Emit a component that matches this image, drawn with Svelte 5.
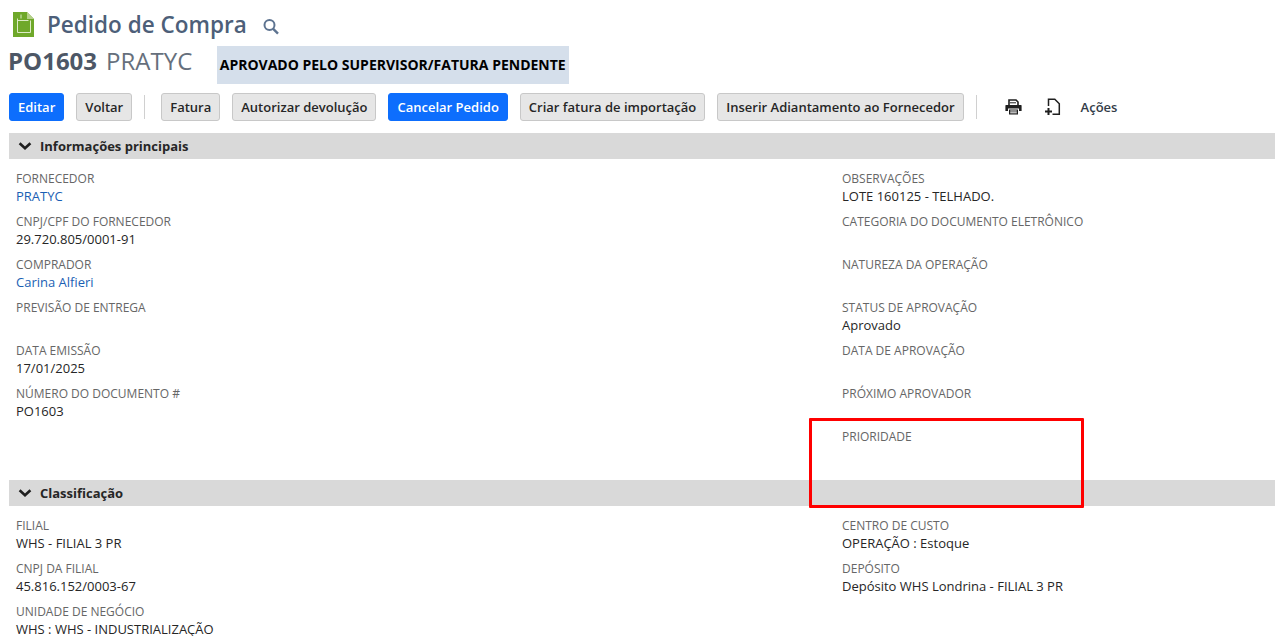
<script>
  const buttons = [
    [
      { label: 'Editar', primary: true },
      { label: 'Voltar' }
    ],
    [
      { label: 'Fatura' },
      { label: 'Autorizar devolução' },
      { label: 'Cancelar Pedido', primary: true },
      { label: 'Criar fatura de importação' },
      { label: 'Inserir Adiantamento ao Fornecedor' }
    ]
  ];

  const mainLeft = [
    { label: 'Fornecedor', value: 'PRATYC', link: true },
    { label: 'CNPJ/CPF do Fornecedor', value: '29.720.805/0001-91' },
    { label: 'Comprador', value: 'Carina Alfieri', link: true },
    { label: 'Previsão de entrega', value: '' },
    { label: 'Data Emissão', value: '17/01/2025' },
    { label: 'Número do documento #', value: 'PO1603' }
  ];
  const mainRight = [
    { label: 'Observações', value: 'LOTE 160125 - TELHADO.' },
    { label: 'Categoria do Documento Eletrônico', value: '' },
    { label: 'Natureza da Operação', value: '' },
    { label: 'Status de aprovação', value: 'Aprovado' },
    { label: 'Data de aprovação', value: '' },
    { label: 'Próximo aprovador', value: '' },
    { label: 'Prioridade', value: '' }
  ];
  const classLeft = [
    { label: 'Filial', value: 'WHS - FILIAL 3 PR' },
    { label: 'CNPJ da Filial', value: '45.816.152/0003-67' },
    { label: 'Unidade de negócio', value: 'WHS : WHS - INDUSTRIALIZAÇÃO' }
  ];
  const classRight = [
    { label: 'Centro de Custo', value: 'OPERAÇÃO : Estoque' },
    { label: 'Depósito', value: 'Depósito WHS Londrina - FILIAL 3 PR' }
  ];
</script>

{#snippet chevron()}
  <svg class="chevron" width="14" height="10" viewBox="0 0 14 10" aria-hidden="true">
    <path d="M1.6 2.2 7 7.2l5.4-5" fill="none" stroke="#1f1f1f" stroke-width="2.6" />
  </svg>
{/snippet}

{#snippet fields(items)}
  <div class="col">
    {#each items as f}
      <div class="field">
        <div class="label">{f.label}</div>
        <div class="value" class:link={f.link}>{f.value}</div>
      </div>
    {/each}
  </div>
{/snippet}

<div class="page">
  <header class="title-row">
    <svg class="doc-icon" width="21" height="27" viewBox="0 0 21 27" aria-hidden="true">
      <path d="M0 1h14l7 7v18H0z" fill="#6fa82a" />
      <path d="M14 1l7 7h-7z" fill="#b5d08a" />
      <path d="M4.5 7.5v14h13v-12M4.5 9.5h11M8 3.5v4" fill="none" stroke="#dcebc5" stroke-width="1" />
    </svg>
    <h1>Pedido de Compra</h1>
    <svg class="search" width="16" height="17" viewBox="0 0 16 17" aria-hidden="true">
      <circle cx="6.5" cy="7" r="5" fill="none" stroke="#5d7390" stroke-width="2" />
      <path d="M10.2 10.8 15 15.6" stroke="#5d7390" stroke-width="2.4" />
    </svg>
  </header>

  <div class="record-row">
    <span class="record-id">PO1603</span>
    <span class="record-name">PRATYC</span>
    <span class="badge">APROVADO PELO SUPERVISOR/FATURA PENDENTE</span>
  </div>

  <div class="toolbar">
    {#each buttons as group, i}
      {#if i > 0}<span class="sep"></span>{/if}
      <div class="group">
        {#each group as b}
          <button class="btn" class:primary={b.primary}>{b.label}</button>
        {/each}
      </div>
    {/each}
    <span class="sep last"></span>
    <svg class="tool print" width="17" height="16" viewBox="0 0 17 16" aria-hidden="true">
      <path d="M4 6V1h7l2 2v3" fill="none" stroke="#1f1f1f" stroke-width="1.6" />
      <path d="M5 3.8h6" stroke="#1f1f1f" stroke-width="1" />
      <path d="M1 6h15a.6.6 0 0 1 .6.6V12H14V9.5H3V12H.4V6.6A.6.6 0 0 1 1 6z" fill="#1f1f1f" />
      <path d="M4 10.5h9v5H4z" fill="#1f1f1f" />
      <path d="M5.2 12h6.6M5.2 13.8h6.6" stroke="#fff" stroke-width="1" />
    </svg>
    <svg class="tool add" width="17" height="18" viewBox="0 0 17 18" aria-hidden="true">
      <path d="M4.5 8V1.2h6.3l4.5 4.5v10.6H8.5" fill="none" stroke="#1f1f1f" stroke-width="1.5" />
      <path d="M4.5 10v7M1 13.5h7" stroke="#1f1f1f" stroke-width="2" />
    </svg>
    <span class="actions">Ações</span>
  </div>

  <section>
    <h2 class="bar">{@render chevron()}Informações principais</h2>
    <div class="grid main">
      {@render fields(mainLeft)}
      {@render fields(mainRight)}
    </div>
  </section>

  <section>
    <h2 class="bar">{@render chevron()}Classificação</h2>
    <div class="grid">
      {@render fields(classLeft)}
      {@render fields(classRight)}
    </div>
  </section>

  <div class="highlight"></div>
</div>

<style>
  :global(body) {
    margin: 0;
    background: #fff;
    overflow: hidden;
  }

  .page {
    position: relative;
    height: 636px;
    overflow: hidden;
    font-family: "Open Sans", "Liberation Sans", sans-serif;
    font-size: 13px;
    color: #262626;
  }

  .title-row {
    display: flex;
    align-items: center;
    height: 38px;
    padding: 12px 0 2px 13px;
    box-sizing: border-box;
  }

  .doc-icon {
    margin-right: 13px;
  }

  h1 {
    margin: 2px 0 0;
    font-size: 22.5px;
    line-height: 30px;
    font-weight: 600;
    color: #4d5f79;
  }

  .search {
    margin: 4px 0 0 16px;
  }

  .record-row {
    display: flex;
    align-items: center;
    height: 46px;
    padding-left: 8px;
    margin-top: 4px;
  }

  .record-id {
    font-size: 24px;
    font-weight: 700;
    color: #4d5766;
    margin-right: 9px;
    margin-bottom: 9px;
  }

  .record-name {
    font-size: 24px;
    color: #666f7c;
    margin-right: 25px;
    margin-bottom: 9px;
  }

  .badge {
    display: flex;
    align-items: center;
    height: 38px;
    padding: 0 3px 2px 2.5px;
    box-sizing: border-box;
    background: #d5dfeb;
    color: #000;
    font-size: 14px;
    font-weight: 700;
  }

  .toolbar {
    display: flex;
    align-items: center;
    height: 28px;
    margin-top: 5px;
    padding-left: 9px;
  }

  .group {
    display: flex;
    gap: 12px;
  }

  .btn {
    height: 28px;
    padding: 0 8px;
    box-sizing: border-box;
    border: 1px solid #c8c8c8;
    border-radius: 3px;
    background: #e6e6e6;
    color: #262626;
    font: 600 13px "Open Sans", "Liberation Sans", sans-serif;
    white-space: nowrap;
  }

  .btn.primary {
    background: #0d6efd;
    border-color: #0d6efd;
    color: #fff;
  }

  .sep {
    width: 1px;
    height: 24px;
    margin: 0 16px 0 12px;
    background: #d0d0d0;
  }

  .sep.last {
    margin: 0 28px 0 12px;
  }

  .tool.add {
    margin-left: 22px;
  }

  .actions {
    margin-left: 20px;
    font-weight: 600;
    font-size: 13px;
    color: #333c48;
  }

  section {
    padding-left: 9px;
  }

  .bar {
    display: flex;
    align-items: center;
    height: 26px;
    margin: 12px 0 0;
    padding-left: 9px;
    background: #d9d9d9;
    color: #262626;
    font-size: 13px;
    font-weight: 700;
  }

  .chevron {
    margin-right: 8px;
  }

  .grid {
    display: grid;
    grid-template-columns: 826px 1fr;
    padding: 11px 0 0 7px;
  }

  .grid.main {
    height: 321px;
    box-sizing: border-box;
  }

  .field {
    height: 43px;
  }

  .label {
    height: 17px;
    line-height: 18px;
    font-size: 12px;
    color: #666;
    text-transform: uppercase;
  }

  .value {
    height: 18px;
    line-height: 18px;
    font-size: 13px;
    color: #262626;
  }

  .value.link {
    color: #1a5fb4;
  }

  section + section .bar {
    margin-top: 0;
  }

  .highlight {
    position: absolute;
    left: 809px;
    top: 418px;
    width: 275px;
    height: 90px;
    box-sizing: border-box;
    border: 3px solid #f00;
    border-radius: 1px;
    pointer-events: none;
  }
</style>
